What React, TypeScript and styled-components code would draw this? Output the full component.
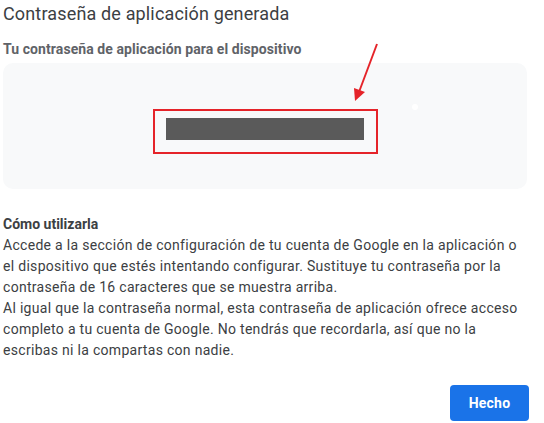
import React from "react";
import styled, { createGlobalStyle } from "styled-components";

const Global = createGlobalStyle`
  html, body { margin: 0; padding: 0; background: #ffffff; }
  body { font-family: Roboto, "Noto Sans", Arial, sans-serif; }
`;

const Page = styled.div`
  position: relative;
  width: 544px;
  height: 423px;
  box-sizing: border-box;
  padding: 3px 15px 0 3px;
  display: flex;
  flex-direction: column;
  overflow: hidden;
`;

const Title = styled.h1`
  margin: 0;
  font-size: 18px;
  line-height: 22px;
  font-weight: 400;
  letter-spacing: 0.15px;
  color: #3c4043;
`;

const Label = styled.h2`
  margin: 14px 0 0 0;
  font-size: 14px;
  line-height: 21px;
  font-weight: 700;
  letter-spacing: 0.08px;
  color: #5f6368;
`;

const PasswordBox = styled.div`
  margin: 3px 2px 0 0;
  height: 126px;
  background: #f8f9fa;
  border-radius: 10px;
  display: flex;
  align-items: flex-start;
  justify-content: center;
  padding-top: 46px;
  box-sizing: border-box;
`;

const Frame = styled.div`
  width: 225px;
  height: 45px;
  box-sizing: border-box;
  border: 2px solid #e52329;
  display: flex;
  padding: 7px 0 0 11px;
`;

const Redacted = styled.div`
  width: 198px;
  height: 22px;
  background: #5a5a5a;
`;

const Dot = styled.span`
  position: absolute;
  left: 412px;
  top: 104px;
  width: 6px;
  height: 6px;
  border-radius: 50%;
  background: #ffffff;
`;

const Arrow = styled.svg`
  position: absolute;
  left: 340px;
  top: 40px;
`;

const HowTo = styled.section`
  margin-top: 25px;
  font-size: 14px;
  line-height: 21px;
  letter-spacing: 0.3px;
  color: #3c4043;
`;

const HowTitle = styled.div`
  font-weight: 700;
  letter-spacing: 0;
  color: #3c4043;
`;

const Para = styled.p`
  margin: 0;
`;

const Footer = styled.div`
  margin-top: auto;
  display: flex;
  justify-content: flex-end;
  padding-bottom: 2px;
`;

const Button = styled.button`
  width: 79px;
  height: 36px;
  border: none;
  border-radius: 4px;
  background: #1a73e8;
  color: #ffffff;
  font-family: Roboto, Arial, sans-serif;
  font-size: 14px;
  font-weight: 700;
  letter-spacing: 0.2px;
`;

export default function App() {
  return (
    <>
      <Global />
      <Page>
        <Title>Contraseña de aplicación generada</Title>
        <Label>Tu contraseña de aplicación para el dispositivo</Label>
        <PasswordBox>
          <Frame>
            <Redacted />
          </Frame>
        </PasswordBox>
        <HowTo>
          <HowTitle>Cómo utilizarla</HowTitle>
          <Para>
            Accede a la sección de configuración de tu cuenta de Google en la aplicación o el dispositivo que estés intentando configurar. Sustituye tu contraseña por la contraseña de 16 caracteres que se muestra arriba.
          </Para>
          <Para>
            Al igual que la contraseña normal, esta contraseña de aplicación ofrece acceso completo a tu cuenta de Google. No tendrás que recordarla, así que no la escribas ni la compartas con nadie.
          </Para>
        </HowTo>
        <Footer>
          <Button>Hecho</Button>
        </Footer>
        <Dot />
        <Arrow width="50" height="65" viewBox="0 0 50 65">
          <line x1="37" y1="4" x2="19" y2="52" stroke="#e52329" strokeWidth="2" />
          <polygon points="14,48 25,52 15,61" fill="#e52329" />
        </Arrow>
      </Page>
    </>
  );
}
